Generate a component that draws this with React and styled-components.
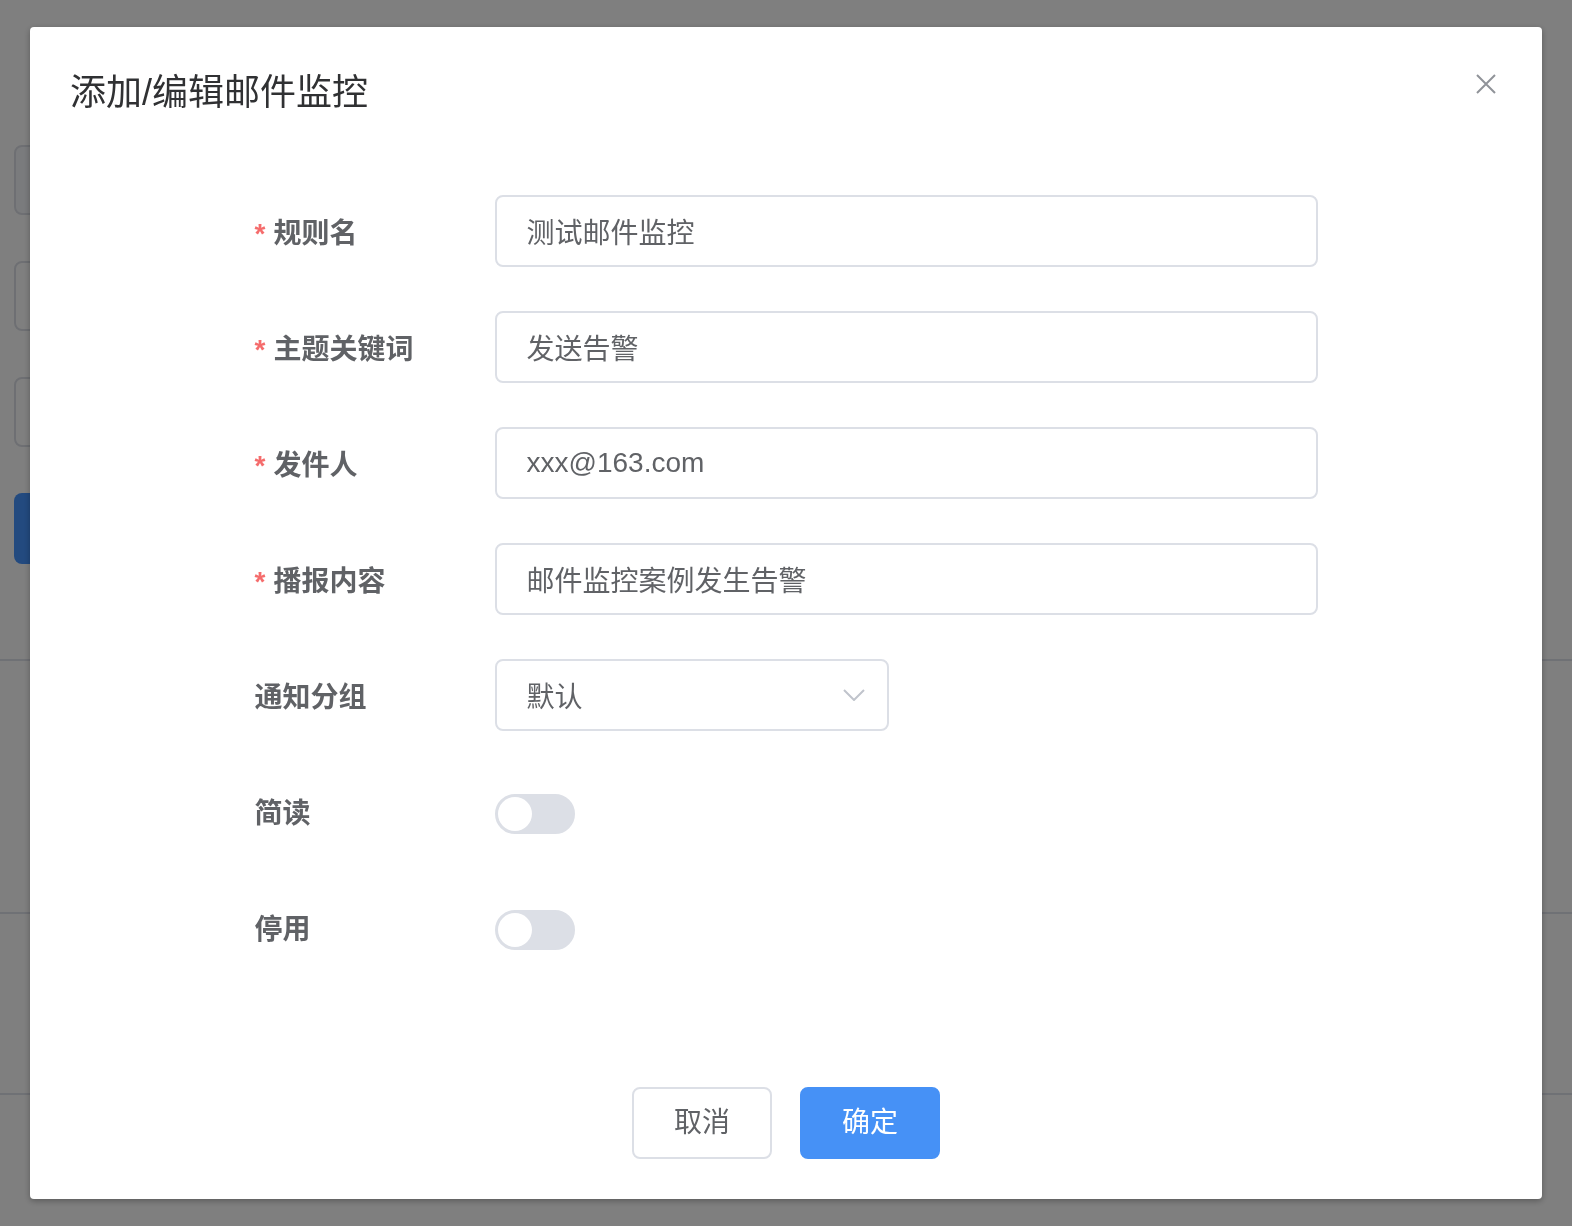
import React, { useState } from "react";
import styled, { createGlobalStyle } from "styled-components";

const GlobalStyle = createGlobalStyle`
  html, body {
    margin: 0;
    padding: 0;
    background: #ffffff;
  }
  body {
    font-family: "Helvetica Neue", "Liberation Sans", "Noto Sans CJK SC", sans-serif;
    -webkit-font-smoothing: antialiased;
  }
  * {
    box-sizing: border-box;
  }
`;

/* page behind the dialog */
const Page = styled.div`
  width: 1572px;
  height: 1226px;
  overflow: hidden;
  background: #fff;
`;
const Filters = styled.div`
  display: flex;
  flex-direction: column;
  gap: 46px;
  padding: 145px 0 0 14px;
`;
const BgInput = styled.div`
  width: 420px;
  height: 70px;
  border: 2px solid #dcdfe6;
  border-radius: 8px;
  background: ${(p) => (p.$filled ? "#f5f7fa" : "#fff")};
`;
const BgButton = styled.div`
  width: 180px;
  height: 71px;
  border-radius: 8px;
  background: #4694ff;
`;
const Table = styled.div`
  margin-top: 95px;
`;
const TableRow = styled.div`
  height: ${(p) => p.$h}px;
  border-top: 2px solid #dfe2ea;
`;

/* modal */
const Mask = styled.div`
  position: fixed;
  inset: 0;
  background: rgba(0, 0, 0, 0.5);
`;
const Dialog = styled.div`
  width: 1512px;
  margin: 27px auto 0;
  background: #fff;
  border-radius: 4px;
  box-shadow: 0 2px 6px rgba(0, 0, 0, 0.3);
`;
const Header = styled.div`
  position: relative;
  padding: 42px 40px 18px;
`;
const Title = styled.span`
  font-size: 36px;
  line-height: 48px;
  color: #303133;
`;
const CloseBtn = styled.button`
  position: absolute;
  top: 41px;
  right: 40px;
  width: 32px;
  height: 32px;
  padding: 0;
  border: none;
  background: transparent;
  display: flex;
  align-items: center;
  justify-content: center;
  cursor: pointer;
`;
const Body = styled.div`
  padding: 60px 40px;
`;
const Form = styled.form`
  width: 1063px;
  margin: 0 auto;
`;
const Item = styled.div`
  display: flex;
  height: 72px;
  margin-bottom: 44px;
`;
const Label = styled.label`
  width: 240px;
  height: 72px;
  flex-shrink: 0;
  padding: 3px 24px 0 0;
  font-size: 28px;
  line-height: 72px;
  font-weight: 700;
  color: #606266;
  &::before {
    content: ${(p) => (p.$required ? "'*'" : "none")};
    color: #f56c6c;
    margin-right: 8px;
    font-weight: 700;
  }
`;
const Control = styled.div`
  flex: 1;
  display: flex;
  align-items: center;
  height: 72px;
`;
const Input = styled.input`
  width: 100%;
  height: 72px;
  padding: 0 30px;
  border: 2px solid #dcdfe6;
  border-radius: 8px;
  font-family: inherit;
  font-size: 28px;
  color: #606266;
  outline: none;
  background: #fff;
`;
const SelectBox = styled.div`
  position: relative;
  width: 394px;
`;
const Arrow = styled.svg`
  position: absolute;
  right: 24px;
  top: 30px;
  pointer-events: none;
`;
const Switch = styled.button`
  position: relative;
  width: 80px;
  height: 40px;
  margin-top: 5px;
  padding: 0;
  border: 2px solid #dcdfe6;
  border-radius: 20px;
  background: ${(p) => (p.$on ? "#409eff" : "#dcdfe6")};
  border-color: ${(p) => (p.$on ? "#409eff" : "#dcdfe6")};
  cursor: pointer;
  &::after {
    content: "";
    position: absolute;
    top: 1px;
    left: ${(p) => (p.$on ? "41px" : "1px")};
    width: 34px;
    height: 34px;
    border-radius: 50%;
    background: #fff;
  }
`;
const Footer = styled.div`
  padding: 20px 40px 40px;
  display: flex;
  justify-content: center;
  gap: 28px;
`;
const Button = styled.button`
  height: 72px;
  padding: 0 40px;
  border-radius: 8px;
  font-family: inherit;
  font-size: 28px;
  line-height: 1;
  cursor: pointer;
  border: 2px solid ${(p) => (p.$primary ? "#4691f6" : "#dcdfe6")};
  background: ${(p) => (p.$primary ? "#4691f6" : "#fff")};
  color: ${(p) => (p.$primary ? "#fff" : "#606266")};
`;

const fields = [
  { label: "规则名", value: "测试邮件监控" },
  { label: "主题关键词", value: "发送告警" },
  { label: "发件人", value: "xxx@163.com" },
  { label: "播报内容", value: "邮件监控案例发生告警" },
];

export default function App() {
  const [brief, setBrief] = useState(false);
  const [disabled, setDisabled] = useState(false);

  return (
    <>
      <GlobalStyle />
      <Page>
        <Filters>
          <BgInput $filled />
          <BgInput />
          <BgInput />
          <BgButton />
        </Filters>
        <Table>
          <TableRow $h={253} />
          <TableRow $h={181} />
          <TableRow $h={100} />
        </Table>
      </Page>

      <Mask>
        <Dialog>
          <Header>
            <Title>添加/编辑邮件监控</Title>
            <CloseBtn aria-label="关闭">
              <svg width="20" height="20" viewBox="0 0 20 20">
                <path d="M1 1 L19 19 M19 1 L1 19" stroke="#909399" strokeWidth="2" fill="none" />
              </svg>
            </CloseBtn>
          </Header>
          <Body>
            <Form>
              {fields.map((f) => (
                <Item key={f.label}>
                  <Label $required>{f.label}</Label>
                  <Control>
                    <Input defaultValue={f.value} />
                  </Control>
                </Item>
              ))}
              <Item>
                <Label>通知分组</Label>
                <Control>
                  <SelectBox>
                    <Input defaultValue="默认" readOnly />
                    <Arrow width="22" height="12" viewBox="0 0 22 12">
                      <path d="M1 1 L11 11 L21 1" stroke="#c0c4cc" strokeWidth="2" fill="none" />
                    </Arrow>
                  </SelectBox>
                </Control>
              </Item>
              <Item>
                <Label>简读</Label>
                <Control>
                  <Switch type="button" $on={brief} onClick={() => setBrief(!brief)} />
                </Control>
              </Item>
              <Item>
                <Label>停用</Label>
                <Control>
                  <Switch type="button" $on={disabled} onClick={() => setDisabled(!disabled)} />
                </Control>
              </Item>
            </Form>
          </Body>
          <Footer>
            <Button type="button">取消</Button>
            <Button type="button" $primary>确定</Button>
          </Footer>
        </Dialog>
      </Mask>
    </>
  );
}
